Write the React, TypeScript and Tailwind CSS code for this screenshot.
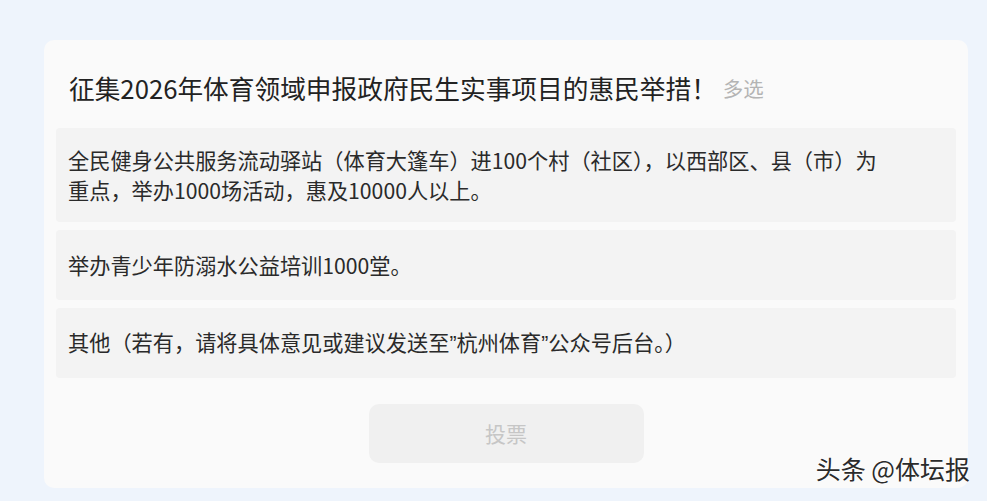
import React from "react";

type Option = {
  id: number;
  lines: React.ReactNode[];
};

const Q = () => <span style={{ fontFamily: '"Liberation Sans", sans-serif' }}>”</span>;

const options: Option[] = [
  {
    id: 1,
    lines: [
      "全民健身公共服务流动驿站（体育大篷车）进100个村（社区），以西部区、县（市）为",
      "重点，举办1000场活动，惠及10000人以上。",
    ],
  },
  { id: 2, lines: ["举办青少年防溺水公益培训1000堂。"] },
  {
    id: 3,
    lines: [
      <>
        其他（若有，请将具体意见或建议发送至<Q />杭州体育<Q />公众号后台。）
      </>,
    ],
  },
];

const App = () => {
  return (
    <div
      className="relative w-[987px] h-[501px] overflow-hidden bg-[#eef4fc] pt-[40px] pl-[44px]"
      style={{ fontFamily: '"Microsoft YaHei", "Noto Sans CJK SC", "Noto Sans", sans-serif' }}
    >
      <div className="w-[924px] h-[448px] rounded-[10px] bg-[#fafafa] px-3 pt-[28px] flex flex-col">
        <div className="h-[40px] pl-[13px] flex items-center gap-[6px]">
          <h1 className="text-[25.7px] leading-[40px] text-[#222] whitespace-nowrap">
            征集2026年体育领域申报政府民生实事项目的惠民举措！
          </h1>
          <span className="text-[20.5px] text-[#b4b4b4] leading-[40px]">多选</span>
        </div>
        <div className="mt-[20px] flex flex-col gap-[8px]">
          {options.map((o) => (
            <div
              key={o.id}
              className="min-h-[70px] flex flex-col justify-center rounded-[4px] bg-[#f3f3f3] px-3 py-[17px] text-[21.2px] leading-[30px] text-[#2a2a2a]"
            >
              {o.lines.map((l, i) => (
                <div key={i} className="whitespace-nowrap">
                  {l}
                </div>
              ))}
            </div>
          ))}
        </div>
        <div className="mt-[26px] flex justify-center">
          <button className="w-[275px] h-[59px] rounded-[10px] bg-[#f0f0f0] text-[21px] text-[#c6c6c6]">
            投票
          </button>
        </div>
      </div>
      <div
        className="absolute right-[17px] bottom-[18px] text-[25px] leading-[30px] text-[#2b2b2b] whitespace-nowrap"
        style={{ textShadow: "0 0 2px #fff, 0 0 2px #fff, 0 0 1px #fff" }}
      >
        头条 @体坛报
      </div>
    </div>
  );
};

export default App;
